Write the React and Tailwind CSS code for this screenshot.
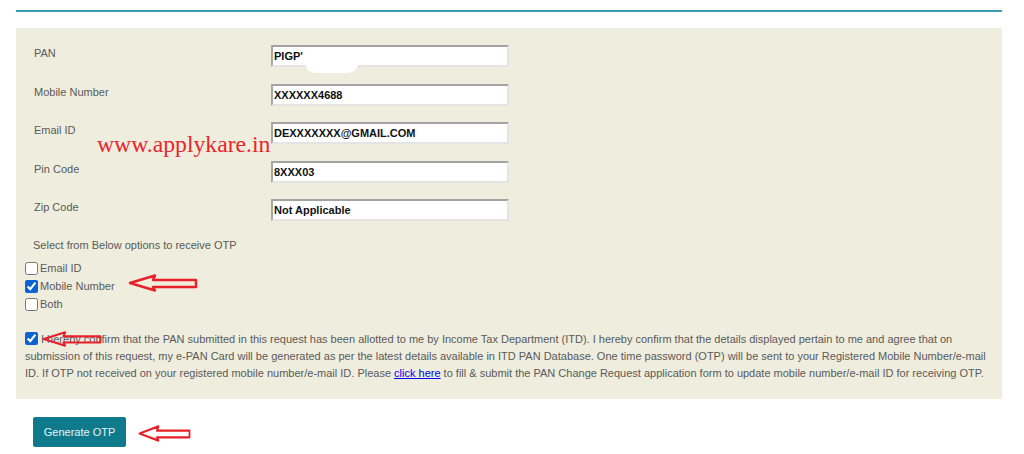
import React from 'react'

function Arrow({ className }) {
    return (
        <svg className={className} viewBox="0 0 70 18" preserveAspectRatio="none" fill="none">
            <polygon
                points="2,9 27,1.5 25,6 68,6 68,13 25,13 27,16.5"
                stroke="#e8202a"
                strokeWidth="2.4"
                strokeLinejoin="round"
            />
        </svg>
    )
}

function Field({ label, value }) {
    return (
        <div className="flex items-start h-[22px]">
            <div className="w-[238px] pl-[1px] pt-[1px] text-[11px] leading-[14px] text-[#5a5a5a]">{label}</div>
            <div className="w-[238px] h-[22px] bg-white border-2 border-t-[#a3a3a3] border-l-[#a8a8a8] border-r-[#e4e4e4] border-b-[#e4e4e4] pl-[1px] text-[11px] font-bold leading-[18px] text-[#111]">
                {value}
            </div>
        </div>
    )
}

function Check({ checked, label }) {
    return (
        <label className="flex items-center h-[18px] gap-[2px] text-[11px] text-[#5a5a5a]">
            <input type="checkbox" defaultChecked={checked} className="m-0 w-[13px] h-[13px] accent-[#0b63d1]" />
            <span>{label}</span>
        </label>
    )
}

export default function App() {
    return (
        <div className="w-[1024px] h-[454px] bg-white overflow-hidden" style={{ fontFamily: '"Liberation Sans", Arial, sans-serif' }}>
            <div className="ml-[16px] w-[986px] pt-[10px]">
                <div className="h-[2px] bg-[#3c9db3]" />

                <div className="relative mt-[16px] bg-[#efeddd] pt-[17px] pb-[17px] pl-[9px] pr-[12px]">
                    <div className="pl-[8px] flex flex-col gap-[16.5px]">
                        <Field label="PAN" value="PIGP'" />
                        <Field label="Mobile Number" value="XXXXXX4688" />
                        <Field label="Email ID" value="DEXXXXXXX@GMAIL.COM" />
                        <Field label="Pin Code" value="8XXX03" />
                        <Field label="Zip Code" value="Not Applicable" />
                    </div>

                    <div className="absolute left-[289px] top-[19px] w-[53px] h-[26px] bg-white rounded-b-[10px]" />

                    <div className="absolute left-[81px] top-[102px] text-[23.7px] leading-[29px] text-[#e8262b]" style={{ fontFamily: '"Liberation Serif", "Times New Roman", serif' }}>
                        www.applykare.in
                    </div>

                    <div className="mt-[16px] pl-[8px] text-[11px] leading-[17px] text-[#5a5a5a]">
                        Select from Below options to receive OTP
                    </div>

                    <div className="mt-[5px] flex flex-col">
                        <Check label="Email ID" />
                        <div className="relative">
                            <Check checked label="Mobile Number" />
                            <Arrow className="absolute left-[103px] top-[-3px] w-[70px] h-[18px]" />
                        </div>
                        <Check label="Both" />
                    </div>

                    <div className="relative mt-[18px] text-[11px] leading-[17px] text-[#5a5a5a]">
                        <input type="checkbox" defaultChecked className="m-0 mr-[3px] w-[13px] h-[13px] align-[-2px] accent-[#0b63d1]" />
                        I hereby confirm that the PAN submitted in this request has been allotted to me by Income Tax Department (ITD). I hereby confirm that the details displayed pertain to me and agree that on
                        <br />
                        submission of this request, my e-PAN Card will be generated as per the latest details available in ITD PAN Database. One time password (OTP) will be sent to your Registered Mobile Number/e-mail
                        <br />
                        ID. If OTP not received on your registered mobile number/e-mail ID. Please{' '}
                        <a href="#" className="text-[#0000ee] underline">click here</a>{' '}
                        to fill &amp; submit the PAN Change Request application form to update mobile number/e-mail ID for receiving OTP.
                        <Arrow className="absolute left-[17px] top-[0px] w-[60px] h-[16px]" />
                    </div>
                </div>

                <div className="mt-[18px] ml-[17px] flex items-center">
                    <button className="w-[93px] h-[30px] rounded-[2px] bg-[#0f7a8c] text-[11px] text-[#e8f3f5]">
                        Generate OTP
                    </button>
                    <Arrow className="ml-[12px] mt-[2px] w-[53px] h-[17px]" />
                </div>
            </div>
        </div>
    )
}
